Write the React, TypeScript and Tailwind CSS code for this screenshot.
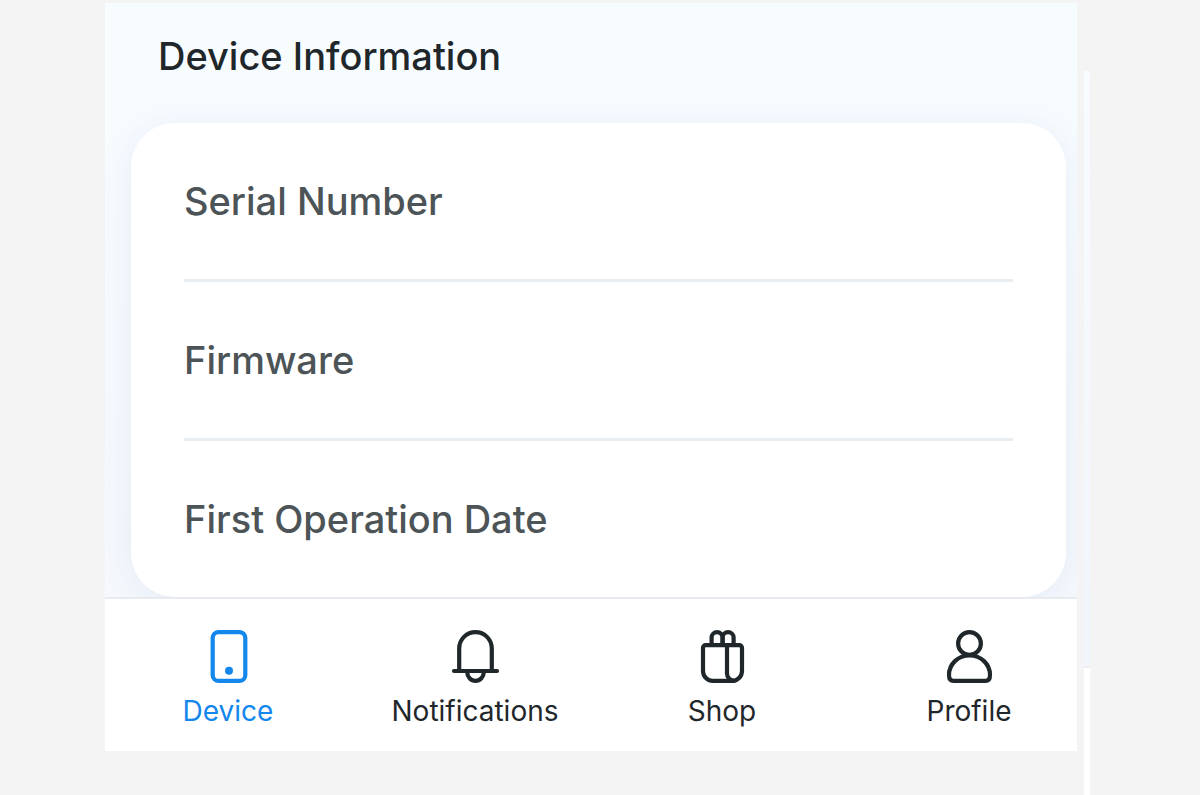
import type { ReactNode } from "react";

type Tab = { label: string; active?: boolean; icon: ReactNode };

const tabs: Tab[] = [
  {
    label: "Device",
    active: true,
    icon: (
      <>
        <rect x="12.7" y="3.1" width="32.6" height="48.8" rx="6" />
        <circle cx="29" cy="41.7" r="4" fill="currentColor" stroke="none" />
      </>
    ),
  },
  {
    label: "Notifications",
    icon: (
      <>
        <path d="M12.2 42V19.4a16.3 16.3 0 0 1 32.6 0V42" />
        <path d="M7 42h43" />
        <path d="M20.2 43a8.3 8.8 0 0 0 16.6 0" />
      </>
    ),
  },
  {
    label: "Shop",
    icon: (
      <>
        <path d="M11.7 16.2h33.6a2.7 2.7 0 0 1 2.7 2.7v23a10 10 0 0 1-10 10H19a10 10 0 0 1-10-10v-23a2.7 2.7 0 0 1 2.7-2.7Z" />
        <path d="M33 16.2v28.3a7.3 7.3 0 0 0 7 7.3" />
        <path d="M17.6 15.500V8.600a5.500 5.500 0 0 1 11 0v6.900" />
        <path d="M28.600 15.500V8.600a5.500 5.500 0 0 1 11 0v6.900" />
      </>
    ),
  },
  {
    label: "Profile",
    icon: (
      <>
        <circle cx="28.5" cy="14.500" r="11.400" />
        <path d="M8 46C8 35 17 26.500 28.500 26.500S49 35 49 46c0 4-1.500 5.900-4.500 5.900h-32C9.500 51.900 8 50 8 46Z" />
      </>
    ),
  },
];

const fields = ["Serial Number", "Firmware", "First Operation Date"];

export default function App() {
  return (
    <div className="flex min-h-screen gap-[7px] bg-[#f4f4f4] pl-[105px] pr-[110px] font-['Inter',sans-serif]">
      <div className="mt-[3px] min-w-0 flex-1 self-start">
        <main className="overflow-hidden bg-linear-to-b from-[#f7fcff] from-20% to-[#f5f9fd] px-[26px] pr-[11px]">
          <h1 className="flex h-[120px] items-start px-[27px] pt-7 text-[38px] leading-[50px] font-medium text-[#1f272b]">
            Device Information
          </h1>
          <ul className="rounded-[44px] bg-white px-[53px] shadow-[0_4px_36px_rgba(70,90,150,0.09)]">
            {fields.map((field) => (
              <li
                key={field}
                className="flex h-[159px] items-center border-b-3 border-[#e8eef1] text-[38px] font-medium text-[#4d5457] last:h-[156px] last:border-b-0"
              >
                {field}
              </li>
            ))}
          </ul>
        </main>
        <nav className="flex justify-between border-t-2 border-[#e7eaef] bg-white pt-[30px] pr-[25px] pb-[18px] pl-10">
          {tabs.map((tab) => (
            <button
              key={tab.label}
              type="button"
              aria-current={tab.active ? "page" : undefined}
              className={`flex w-[166px] flex-col items-center ${tab.active ? "text-[#1487ec]" : "text-[#1f272b]"}`}
            >
              <svg
                viewBox="0 0 56 56"
                className="size-14"
                fill="none"
                stroke="currentColor"
                strokeWidth="4.2"
                strokeLinecap="round"
                strokeLinejoin="round"
                aria-hidden="true"
              >
                {tab.icon}
              </svg>
              <span className="mt-1 text-[28px] leading-[44px]">{tab.label}</span>
            </button>
          ))}
        </nav>
      </div>
      <div className="mt-[71px] flex w-[6px] flex-col bg-white">
        <div className="h-[597px] border-b-2 border-[#eceef2] bg-linear-to-b from-[#f8fcff] to-[#f1f5fc]" />
      </div>
    </div>
  );
}
